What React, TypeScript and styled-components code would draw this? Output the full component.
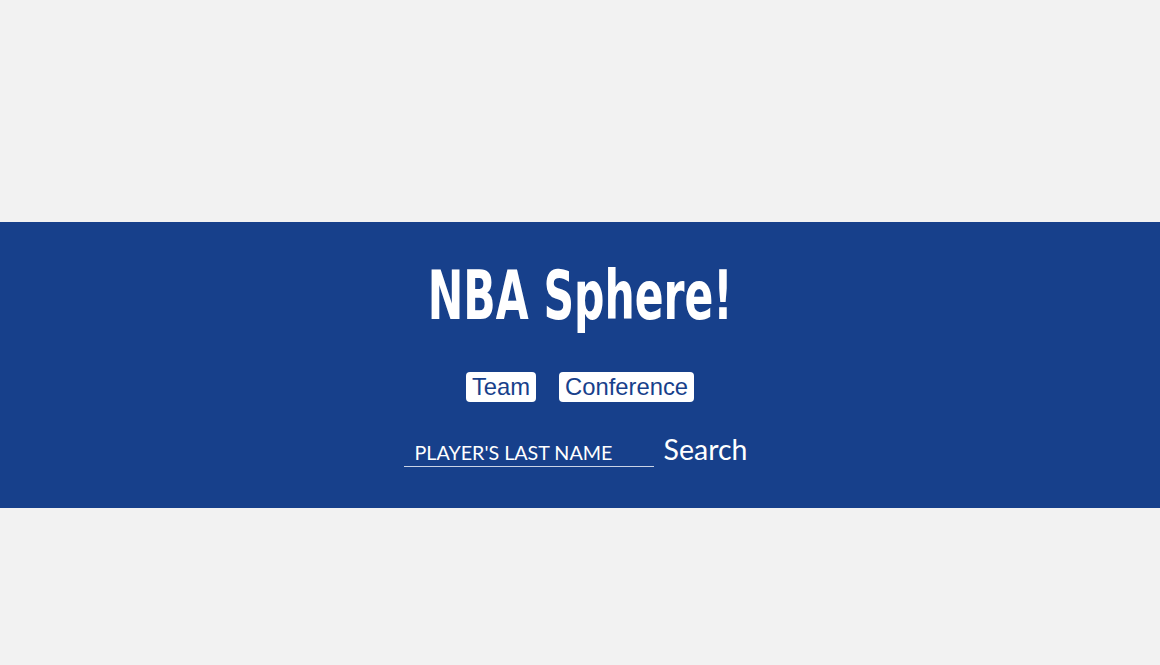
import React from "react";
import styled, { createGlobalStyle } from "styled-components";

const Global = createGlobalStyle`
  html, body { margin: 0; padding: 0; background: #f2f2f2; }
  body { font-family: "Liberation Sans", Arial, sans-serif; }
`;

const Page = styled.div`
  padding-top: 222px;
`;

const Banner = styled.header`
  background: #17408b;
  height: 286px;
  box-sizing: border-box;
  padding-top: 36px;
  display: flex;
  flex-direction: column;
  align-items: center;
`;

const Title = styled.h1`
  margin: 0;
  color: #fff;
  font-family: "DejaVu Sans Condensed", "DejaVu Sans", sans-serif;
  font-stretch: condensed;
  font-weight: 700;
  font-size: 67px;
  line-height: 76px;
  transform: scaleX(0.705);
  transform-origin: center;
  white-space: nowrap;
`;

const Filters = styled.div`
  display: flex;
  gap: 23px;
  margin-top: 38px;
`;

const FilterButton = styled.button`
  background: #fff;
  color: #17408b;
  border: none;
  border-radius: 4px;
  font-family: "Liberation Sans", Arial, sans-serif;
  font-size: 23.8px;
  height: 30px;
  padding: 0 6px;
  cursor: pointer;
`;

const SearchForm = styled.form`
  display: flex;
  align-items: flex-end;
  gap: 10px;
  margin-top: 30px;
  padding-right: 9px;
`;

const NameInput = styled.input`
  width: 250px;
  box-sizing: border-box;
  background: transparent;
  border: none;
  border-bottom: 1px solid #c9d3e6;
  color: #fff;
  font-family: Lato, sans-serif;
  font-size: 19.7px;
  padding: 0 0 2px 11px;
  outline: none;
  &::placeholder { color: #fff; opacity: 1; }
`;

const SearchButton = styled.button`
  background: transparent;
  border: none;
  color: #fff;
  font-family: Lato, sans-serif;
  font-size: 28.5px;
  padding: 0;
  margin-bottom: 1px;
  cursor: pointer;
`;

export default function App() {
  return (
    <Page>
      <Global />
      <Banner>
        <Title>NBA Sphere!</Title>
        <Filters>
          <FilterButton>Team</FilterButton>
          <FilterButton>Conference</FilterButton>
        </Filters>
        <SearchForm onSubmit={(e) => e.preventDefault()}>
          <NameInput placeholder="PLAYER'S LAST NAME" />
          <SearchButton type="submit">Search</SearchButton>
        </SearchForm>
      </Banner>
    </Page>
  );
}
